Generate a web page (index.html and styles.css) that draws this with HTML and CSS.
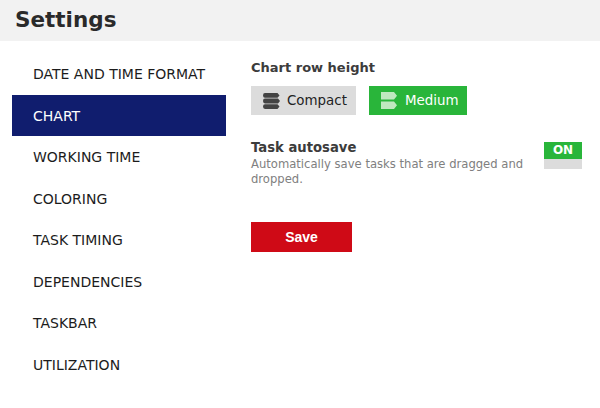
FILE: index.html
```html
<!DOCTYPE html>
<html lang="en">
<head>
    <meta charset="UTF-8">
    <title>Settings</title>
    <link rel="stylesheet" href="styles.css">
</head>
<body>

<div class="header">
    <h1>Settings</h1>
</div>

<div class="main">
    <ul class="menu">
        <li>DATE AND TIME FORMAT</li>
        <li class="active">CHART</li>
        <li>WORKING TIME</li>
        <li>COLORING</li>
        <li>TASK TIMING</li>
        <li>DEPENDENCIES</li>
        <li>TASKBAR</li>
        <li>UTILIZATION</li>
    </ul>

    <div class="content">
        <h2>Chart row height</h2>
        <div class="row-options">
            <div class="option">
                <svg class="option-icon" width="17" height="16" viewBox="0 0 17 16">
                    <path fill="#444" d="M2 0H14.500L16.500 2.400L14.500 4.800H2Q0 4.800 0 2.400Q0 0 2 0ZM2 5.600H15L17 8L15 10.400H2Q0 10.400 0 8Q0 5.600 2 5.600ZM2 11.200H14.500L16.500 13.600L14.500 16H2Q0 16 0 13.600Q0 11.200 2 11.200Z"/>
                </svg>
                Compact
            </div>
            <div class="option selected">
                <svg class="option-icon" width="16" height="17" viewBox="0 0 16 17">
                    <path fill="#bfe8bf" d="M0 0H13L16 3.800L13 7.600H0ZM0 9.400H13L16 13.200L13 17H0Z"/>
                </svg>
                Medium
            </div>
        </div>

        <div class="autosave">
            <div class="autosave-text">
                <h2 class="autosave-title">Task autosave</h2>
                <p>Automatically save tasks that are dragged and dropped.</p>
            </div>
            <div class="toggle">
                <div class="toggle-on">ON</div>
                <div class="toggle-off"></div>
            </div>
        </div>

        <button class="save">Save</button>
    </div>
</div>

</body>
</html>
```

FILE: styles.css
```css
body {
    font-family: "DejaVu Sans", sans-serif;
    margin: 0;
    padding: 0;
    background: white;
    color: #222;
}

.header {
    background-color: #f2f2f2;
    height: 41px;
    padding-left: 15px;
}

h1 {
    margin: 0;
    font-size: 21.5px;
    line-height: 40px;
    font-weight: bold;
    color: #2a2a2a;
}

.main {
    display: flex;
    padding: 12px 0 0 12px;
}

.menu {
    list-style: none;
    margin: 0;
    padding: 0;
    width: 214px;
    flex-shrink: 0;
}

.menu li {
    height: 41.5px;
    line-height: 43px;
    padding-left: 21px;
    font-size: 14px;
    color: #1c1c1c;
}

.menu li.active {
    background-color: #101d6e;
    color: white;
}

.content {
    width: 331px;
    margin-left: 25px;
    padding-top: 6px;
}

h2 {
    margin: 0;
    font-size: 13px;
    line-height: 18px;
    font-weight: bold;
    color: #3c3c3c;
}

.autosave-title {
    font-size: 13.2px;
}

.row-options {
    display: flex;
    gap: 13px;
    margin-top: 9px;
}

.option {
    display: flex;
    align-items: center;
    gap: 7px;
    height: 29px;
    padding: 0 9px 0 12px;
    background-color: #dcdcdc;
    font-size: 13.4px;
    color: #222;
}

.option.selected {
    background-color: #29b53a;
    color: white;
    padding: 0 9px 0 12px;
    gap: 8px;
}

.autosave {
    display: flex;
    justify-content: space-between;
    margin-top: 24px;
}

.autosave-text {
    width: 285px;
}

.autosave-text p {
    margin: 0;
    font-size: 11.6px;
    line-height: 15px;
    color: #808080;
}

.toggle {
    width: 38px;
    margin-top: 3px;
}

.toggle-on {
    height: 17px;
    line-height: 17px;
    background-color: #29b53a;
    color: white;
    font-size: 12px;
    font-weight: bold;
    text-align: center;
}

.toggle-off {
    height: 10px;
    background-color: #dcdcdc;
}

.save {
    display: block;
    width: 101px;
    height: 30px;
    margin-top: 35px;
    border: none;
    background-color: #cf0a16;
    color: white;
    font-family: "Liberation Sans", Arial, sans-serif;
    font-size: 14px;
    font-weight: bold;
}
```
